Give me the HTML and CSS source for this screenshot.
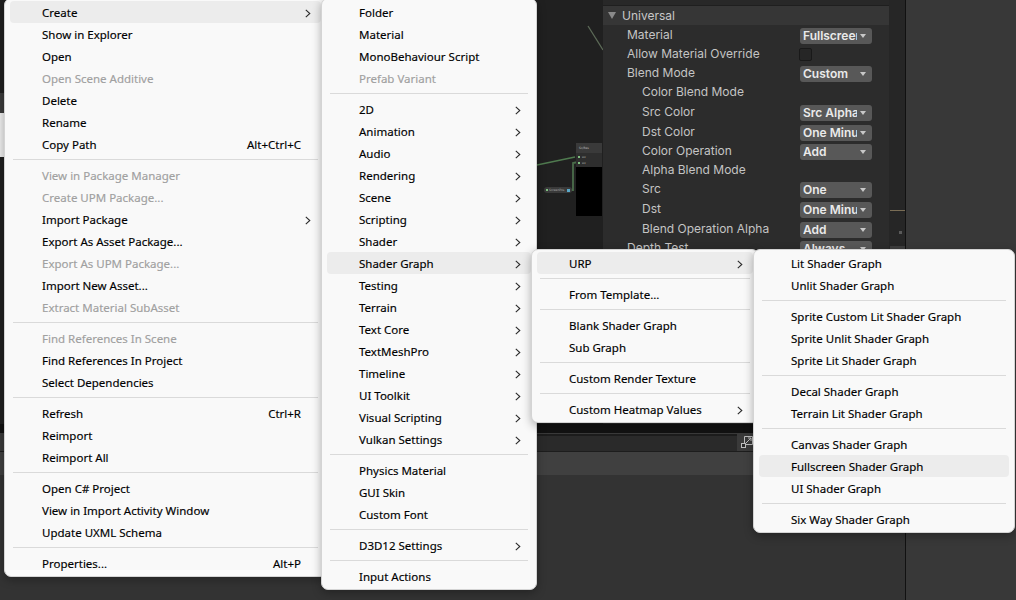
FILE: index.html
```html
<!DOCTYPE html>
<html>
<head>
<meta charset="utf-8">
<link rel="stylesheet" href="styles.css">
</head>
<body>
<div class="editor">
  <div class="main">
    <div class="upper">
      <div class="graph">
        <div class="bb-gray"></div>
        <div class="bb-light"></div>
        <svg class="edges" width="603" height="424" viewBox="0 0 603 424">
          <path d="M588 26 L603 50" stroke="#5d6b58" stroke-width="1.2" fill="none"/>
          <path d="M500 172 L537 165 L575 157" stroke="#4f7a4f" stroke-width="1.6" fill="none"/>
          <path d="M571 190 L573 190 L573 163 L578 162" stroke="#4a6d4a" stroke-width="1.8" fill="none"/>
        </svg>
        <div class="node">
          <div class="node-head">Sc/Res</div>
          <div class="node-ports">
            <div class="port"><i></i>uv</div>
            <div class="port"><i></i>uv</div>
          </div>
          <div class="node-preview"></div>
        </div>
        <div class="mini-node"><i class="g"></i><span>ScreenPos</span><i class="b"></i></div>
      </div>
      <div class="inspector">
        <div class="insp-top"></div>
        <div class="insp-head"><span class="tri"></span>Universal</div>
        <div class="prop h19"><span class="plabel">Material</span><span class="dd"><span class="ddt">Fullscreen</span><span class="ddarrow"></span></span></div>
        <div class="prop h19"><span class="plabel">Allow Material Override</span><span class="check"></span></div>
        <div class="prop h19"><span class="plabel">Blend Mode</span><span class="dd"><span class="ddt">Custom</span><span class="ddarrow"></span></span></div>
        <div class="prop h19"><span class="plabel ind">Color Blend Mode</span></div>
        <div class="prop h20"><span class="plabel ind">Src Color</span><span class="dd"><span class="ddt">Src Alpha</span><span class="ddarrow"></span></span></div>
        <div class="prop h20"><span class="plabel ind">Dst Color</span><span class="dd"><span class="ddt">One Minus Src Alpha</span><span class="ddarrow"></span></span></div>
        <div class="prop h19"><span class="plabel ind">Color Operation</span><span class="dd"><span class="ddt">Add</span><span class="ddarrow"></span></span></div>
        <div class="prop h19"><span class="plabel ind">Alpha Blend Mode</span></div>
        <div class="prop h19"><span class="plabel ind">Src</span><span class="dd"><span class="ddt">One</span><span class="ddarrow"></span></span></div>
        <div class="prop h20"><span class="plabel ind">Dst</span><span class="dd"><span class="ddt">One Minus Src Alpha</span><span class="ddarrow"></span></span></div>
        <div class="prop h20"><span class="plabel ind">Blend Operation Alpha</span><span class="dd"><span class="ddt">Add</span><span class="ddarrow"></span></span></div>
        <div class="prop h19"><span class="plabel">Depth Test</span><span class="dd"><span class="ddt">Always</span><span class="ddarrow"></span></span></div>
      </div>
      <div class="scroll">
        <div class="scroll-space"></div>
        <div class="scroll-tan"></div>
        <div class="scroll-dot"></div>
        <div class="scroll-block"></div>
      </div>
    </div>
    <div class="blackstrip"></div>
    <div class="toolbar">
      <div class="field"></div>
      <svg class="open-icon" width="14" height="14" viewBox="0 0 14 14">
        <path d="M4.5 1.5 H12.5 V9.5 H4.5 Z" fill="none" stroke="#bdbdbd" stroke-width="1"/>
        <path d="M6 8 L11 3 M8 3 H11 V6" fill="none" stroke="#bdbdbd" stroke-width="1"/>
        <rect x="1.5" y="8.5" width="4" height="4" fill="#2a2a2a" stroke="#bdbdbd" stroke-width="1"/>
      </svg>
    </div>
    <div class="band"></div>
    <div class="rest"></div>
  </div>
  <div class="vline"></div>
  <div class="right"></div>
</div>

<div class="menu m1">
  <div class="item active"><span class="label">Create</span><span class="arrow"><svg width="6" height="9" viewBox="0 0 6 9"><path d="M0.8 0.8 L4.8 4.5 L0.8 8.2" fill="none" stroke="#2b2b2b" stroke-width="1.1"/></svg></span></div>
  <div class="item"><span class="label">Show in Explorer</span></div>
  <div class="item"><span class="label">Open</span></div>
  <div class="item disabled"><span class="label">Open Scene Additive</span></div>
  <div class="item"><span class="label">Delete</span></div>
  <div class="item"><span class="label">Rename</span></div>
  <div class="item"><span class="label">Copy Path</span><span class="key">Alt+Ctrl+C</span></div>
  <div class="sep"></div>
  <div class="item disabled"><span class="label">View in Package Manager</span></div>
  <div class="item disabled"><span class="label">Create UPM Package...</span></div>
  <div class="item"><span class="label">Import Package</span><span class="arrow"><svg width="6" height="9" viewBox="0 0 6 9"><path d="M0.8 0.8 L4.8 4.5 L0.8 8.2" fill="none" stroke="#2b2b2b" stroke-width="1.1"/></svg></span></div>
  <div class="item"><span class="label">Export As Asset Package...</span></div>
  <div class="item disabled"><span class="label">Export As UPM Package...</span></div>
  <div class="item"><span class="label">Import New Asset...</span></div>
  <div class="item disabled"><span class="label">Extract Material SubAsset</span></div>
  <div class="sep"></div>
  <div class="item disabled"><span class="label">Find References In Scene</span></div>
  <div class="item"><span class="label">Find References In Project</span></div>
  <div class="item"><span class="label">Select Dependencies</span></div>
  <div class="sep"></div>
  <div class="item"><span class="label">Refresh</span><span class="key">Ctrl+R</span></div>
  <div class="item"><span class="label">Reimport</span></div>
  <div class="item"><span class="label">Reimport All</span></div>
  <div class="sep"></div>
  <div class="item"><span class="label">Open C# Project</span></div>
  <div class="item"><span class="label">View in Import Activity Window</span></div>
  <div class="item"><span class="label">Update UXML Schema</span></div>
  <div class="sep"></div>
  <div class="item"><span class="label">Properties...</span><span class="key">Alt+P</span></div>
</div>

<div class="menu m2">
  <div class="item"><span class="label">Folder</span></div>
  <div class="item"><span class="label">Material</span></div>
  <div class="item"><span class="label">MonoBehaviour Script</span></div>
  <div class="item disabled"><span class="label">Prefab Variant</span></div>
  <div class="sep"></div>
  <div class="item"><span class="label">2D</span><span class="arrow"><svg width="6" height="9" viewBox="0 0 6 9"><path d="M0.8 0.8 L4.8 4.5 L0.8 8.2" fill="none" stroke="#2b2b2b" stroke-width="1.1"/></svg></span></div>
  <div class="item"><span class="label">Animation</span><span class="arrow"><svg width="6" height="9" viewBox="0 0 6 9"><path d="M0.8 0.8 L4.8 4.5 L0.8 8.2" fill="none" stroke="#2b2b2b" stroke-width="1.1"/></svg></span></div>
  <div class="item"><span class="label">Audio</span><span class="arrow"><svg width="6" height="9" viewBox="0 0 6 9"><path d="M0.8 0.8 L4.8 4.5 L0.8 8.2" fill="none" stroke="#2b2b2b" stroke-width="1.1"/></svg></span></div>
  <div class="item"><span class="label">Rendering</span><span class="arrow"><svg width="6" height="9" viewBox="0 0 6 9"><path d="M0.8 0.8 L4.8 4.5 L0.8 8.2" fill="none" stroke="#2b2b2b" stroke-width="1.1"/></svg></span></div>
  <div class="item"><span class="label">Scene</span><span class="arrow"><svg width="6" height="9" viewBox="0 0 6 9"><path d="M0.8 0.8 L4.8 4.5 L0.8 8.2" fill="none" stroke="#2b2b2b" stroke-width="1.1"/></svg></span></div>
  <div class="item"><span class="label">Scripting</span><span class="arrow"><svg width="6" height="9" viewBox="0 0 6 9"><path d="M0.8 0.8 L4.8 4.5 L0.8 8.2" fill="none" stroke="#2b2b2b" stroke-width="1.1"/></svg></span></div>
  <div class="item"><span class="label">Shader</span><span class="arrow"><svg width="6" height="9" viewBox="0 0 6 9"><path d="M0.8 0.8 L4.8 4.5 L0.8 8.2" fill="none" stroke="#2b2b2b" stroke-width="1.1"/></svg></span></div>
  <div class="item active"><span class="label">Shader Graph</span><span class="arrow"><svg width="6" height="9" viewBox="0 0 6 9"><path d="M0.8 0.8 L4.8 4.5 L0.8 8.2" fill="none" stroke="#2b2b2b" stroke-width="1.1"/></svg></span></div>
  <div class="item"><span class="label">Testing</span><span class="arrow"><svg width="6" height="9" viewBox="0 0 6 9"><path d="M0.8 0.8 L4.8 4.5 L0.8 8.2" fill="none" stroke="#2b2b2b" stroke-width="1.1"/></svg></span></div>
  <div class="item"><span class="label">Terrain</span><span class="arrow"><svg width="6" height="9" viewBox="0 0 6 9"><path d="M0.8 0.8 L4.8 4.5 L0.8 8.2" fill="none" stroke="#2b2b2b" stroke-width="1.1"/></svg></span></div>
  <div class="item"><span class="label">Text Core</span><span class="arrow"><svg width="6" height="9" viewBox="0 0 6 9"><path d="M0.8 0.8 L4.8 4.5 L0.8 8.2" fill="none" stroke="#2b2b2b" stroke-width="1.1"/></svg></span></div>
  <div class="item"><span class="label">TextMeshPro</span><span class="arrow"><svg width="6" height="9" viewBox="0 0 6 9"><path d="M0.8 0.8 L4.8 4.5 L0.8 8.2" fill="none" stroke="#2b2b2b" stroke-width="1.1"/></svg></span></div>
  <div class="item"><span class="label">Timeline</span><span class="arrow"><svg width="6" height="9" viewBox="0 0 6 9"><path d="M0.8 0.8 L4.8 4.5 L0.8 8.2" fill="none" stroke="#2b2b2b" stroke-width="1.1"/></svg></span></div>
  <div class="item"><span class="label">UI Toolkit</span><span class="arrow"><svg width="6" height="9" viewBox="0 0 6 9"><path d="M0.8 0.8 L4.8 4.5 L0.8 8.2" fill="none" stroke="#2b2b2b" stroke-width="1.1"/></svg></span></div>
  <div class="item"><span class="label">Visual Scripting</span><span class="arrow"><svg width="6" height="9" viewBox="0 0 6 9"><path d="M0.8 0.8 L4.8 4.5 L0.8 8.2" fill="none" stroke="#2b2b2b" stroke-width="1.1"/></svg></span></div>
  <div class="item"><span class="label">Vulkan Settings</span><span class="arrow"><svg width="6" height="9" viewBox="0 0 6 9"><path d="M0.8 0.8 L4.8 4.5 L0.8 8.2" fill="none" stroke="#2b2b2b" stroke-width="1.1"/></svg></span></div>
  <div class="sep"></div>
  <div class="item"><span class="label">Physics Material</span></div>
  <div class="item"><span class="label">GUI Skin</span></div>
  <div class="item"><span class="label">Custom Font</span></div>
  <div class="sep"></div>
  <div class="item"><span class="label">D3D12 Settings</span><span class="arrow"><svg width="6" height="9" viewBox="0 0 6 9"><path d="M0.8 0.8 L4.8 4.5 L0.8 8.2" fill="none" stroke="#2b2b2b" stroke-width="1.1"/></svg></span></div>
  <div class="sep"></div>
  <div class="item"><span class="label">Input Actions</span></div>
</div>

<div class="menu m3">
  <div class="item active"><span class="label">URP</span><span class="arrow"><svg width="6" height="9" viewBox="0 0 6 9"><path d="M0.8 0.8 L4.8 4.5 L0.8 8.2" fill="none" stroke="#2b2b2b" stroke-width="1.1"/></svg></span></div>
  <div class="sep"></div>
  <div class="item"><span class="label">From Template...</span></div>
  <div class="sep"></div>
  <div class="item"><span class="label">Blank Shader Graph</span></div>
  <div class="item"><span class="label">Sub Graph</span></div>
  <div class="sep"></div>
  <div class="item"><span class="label">Custom Render Texture</span></div>
  <div class="sep"></div>
  <div class="item"><span class="label">Custom Heatmap Values</span><span class="arrow"><svg width="6" height="9" viewBox="0 0 6 9"><path d="M0.8 0.8 L4.8 4.5 L0.8 8.2" fill="none" stroke="#2b2b2b" stroke-width="1.1"/></svg></span></div>
</div>

<div class="menu m4">
  <div class="item"><span class="label">Lit Shader Graph</span></div>
  <div class="item"><span class="label">Unlit Shader Graph</span></div>
  <div class="sep"></div>
  <div class="item"><span class="label">Sprite Custom Lit Shader Graph</span></div>
  <div class="item"><span class="label">Sprite Unlit Shader Graph</span></div>
  <div class="item"><span class="label">Sprite Lit Shader Graph</span></div>
  <div class="sep"></div>
  <div class="item"><span class="label">Decal Shader Graph</span></div>
  <div class="item"><span class="label">Terrain Lit Shader Graph</span></div>
  <div class="sep"></div>
  <div class="item"><span class="label">Canvas Shader Graph</span></div>
  <div class="item active"><span class="label">Fullscreen Shader Graph</span></div>
  <div class="item"><span class="label">UI Shader Graph</span></div>
  <div class="sep"></div>
  <div class="item"><span class="label">Six Way Shader Graph</span></div>
</div>
</body>
</html>
```

FILE: styles.css
```css
html, body {
  margin: 0;
  padding: 0;
  width: 1016px;
  height: 600px;
  overflow: hidden;
  background: #333333;
}

.editor {
  display: flex;
  width: 1016px;
  height: 600px;
}

.main {
  width: 905px;
  display: flex;
  flex-direction: column;
}

.upper {
  display: flex;
  height: 424px;
}

/* graph canvas */
.graph {
  position: relative;
  width: 603px;
  background: #202020;
  overflow: hidden;
}
.bb-gray {
  position: absolute;
  left: 0;
  top: 93px;
  width: 60px;
  height: 20px;
  background: #3b3b3b;
}
.bb-light {
  position: absolute;
  left: 0;
  top: 113px;
  width: 60px;
  height: 44px;
  background: #eeeeee;
}
.edges {
  position: absolute;
  left: 0;
  top: 0;
}
.node {
  position: absolute;
  left: 576px;
  top: 143px;
  width: 26px;
  font-family: "DejaVu Sans", sans-serif;
  font-size: 3px;
  color: #bbbbbb;
}
.node-head {
  height: 10px;
  line-height: 10px;
  padding-left: 3px;
  background: #3a3a3a;
}
.node-ports {
  height: 14px;
  background: #2e2e2e;
  padding-top: 1px;
  box-sizing: border-box;
}
.port {
  display: flex;
  align-items: center;
  gap: 2px;
  height: 6px;
  padding-left: 2px;
}
.port i {
  width: 2px;
  height: 2px;
  background: #7fbf7f;
}
.node-preview {
  height: 49px;
  background: #000000;
}
.mini-node {
  position: absolute;
  left: 544px;
  top: 187px;
  width: 28px;
  height: 6px;
  border-radius: 3px;
  background: #3a3a3a;
  display: flex;
  align-items: center;
  gap: 1px;
  padding: 0 2px;
  box-sizing: border-box;
  font-family: "DejaVu Sans", sans-serif;
  font-size: 3px;
  color: #aaaaaa;
  overflow: hidden;
}
.mini-node .g {
  width: 2px;
  height: 2px;
  background: #80c080;
  flex: none;
}
.mini-node span {
  flex: 1;
  white-space: nowrap;
  overflow: hidden;
}
.mini-node .b {
  width: 3px;
  height: 3px;
  background: #5aa9c9;
  flex: none;
}

/* inspector */
.inspector {
  width: 286px;
  background: #2c2c2c;
  font-family: Inter, "Noto Sans", sans-serif;
  font-size: 12px;
  color: #c4c4c4;
}
.insp-top {
  height: 5px;
  background: #282828;
  border-bottom: 1px solid #1f1f1f;
}
.insp-head {
  height: 19px;
  display: flex;
  align-items: center;
  background: #363636;
  padding-left: 5px;
  color: #c8c8c8;
}
.tri {
  width: 0;
  height: 0;
  border-left: 4px solid transparent;
  border-right: 4px solid transparent;
  border-top: 7px solid #8a8a8a;
  margin-right: 6px;
}
.prop {
  display: flex;
  align-items: center;
}
.h19 { height: 19px; }
.h20 { height: 20px; }
.plabel {
  width: 196px;
  padding-left: 24px;
  box-sizing: border-box;
  white-space: nowrap;
}
.plabel.ind {
  padding-left: 39px;
}
.dd {
  display: flex;
  align-items: center;
  width: 72px;
  height: 16px;
  margin-top: 3px;
  margin-left: 1px;
  box-sizing: border-box;
  padding: 0 6px 0 3px;
  background: #585858;
  border-radius: 3px;
  color: #eaeaea;
  font-weight: 600;
}
.ddt {
  flex: 1;
  overflow: hidden;
  white-space: nowrap;
  line-height: 16px;
}
.ddarrow {
  width: 0;
  height: 0;
  margin-left: 3px;
  border-left: 3px solid transparent;
  border-right: 3px solid transparent;
  border-top: 4px solid #c8c8c8;
}
.check {
  width: 13px;
  height: 13px;
  box-sizing: border-box;
  background: #262626;
  border: 1px solid #191919;
  border-radius: 2px;
  margin-top: 1px;
}

.scroll {
  width: 16px;
  background: #262626;
  display: flex;
  flex-direction: column;
}
.scroll-space { height: 210px; }
.scroll-tan {
  height: 1px;
  margin-left: 1px;
  background: #7a6d55;
}
.scroll-dot {
  width: 3px;
  height: 3px;
  margin: 20px 0 0 10px;
  background: #5a5a5a;
}
.scroll-block {
  height: 12px;
  margin: 12px 0 0 1px;
  background: #3d3d3d;
}

.blackstrip {
  height: 9px;
  background: #121212;
}
.toolbar {
  height: 19px;
  display: flex;
  align-items: center;
  background: #3a3a3a;
  border-bottom: 1px solid #1d1d1d;
  box-sizing: border-box;
  padding-left: 4px;
}
.field {
  width: 733px;
  height: 17px;
  box-sizing: border-box;
  background: #2a2a2a;
  border-top: 2px solid #1d1d1d;
}
.open-icon {
  margin-left: 3px;
}
.band {
  height: 23px;
  background: #404040;
}
.rest {
  flex: 1;
  background: #333333;
}
.vline {
  width: 1px;
  background: #111111;
}
.right {
  flex: 1;
  background: #383838;
}

/* menus */
.menu {
  position: absolute;
  box-sizing: border-box;
  background: #f9f9f9;
  border: 1px solid #d4d4d4;
  border-radius: 7px;
  padding: 2px 5px;
  box-shadow: 0 3px 10px rgba(0, 0, 0, 0.3);
  font-family: "Noto Sans", sans-serif;
  font-size: 11.5px;
  color: #000000;
  -webkit-text-stroke: 0.15px currentColor;
}
.m1 { left: 4px; top: -2px; width: 323px; z-index: 1; }
.m2 { left: 321px; top: -2px; width: 216px; z-index: 2; }
.m3 { left: 531px; top: 249px; width: 228px; z-index: 3; }
.m4 { left: 753px; top: 249px; width: 262px; z-index: 4; }

.item {
  display: flex;
  align-items: center;
  box-sizing: border-box;
  height: 22px;
  line-height: 20px;
  padding: 2px 10px 0 32px;
  border-radius: 4px;
  white-space: nowrap;
}
.item .label {
  flex: 1;
}
.item .key {
  margin-right: 10px;
}
.item .arrow {
  display: flex;
  align-items: center;
}
.item.active {
  background: #ececec;
}
.item.disabled {
  color: #a0a0a0;
}
.sep {
  height: 1px;
  margin: 4px 3px;
  background: #dadada;
}
```
